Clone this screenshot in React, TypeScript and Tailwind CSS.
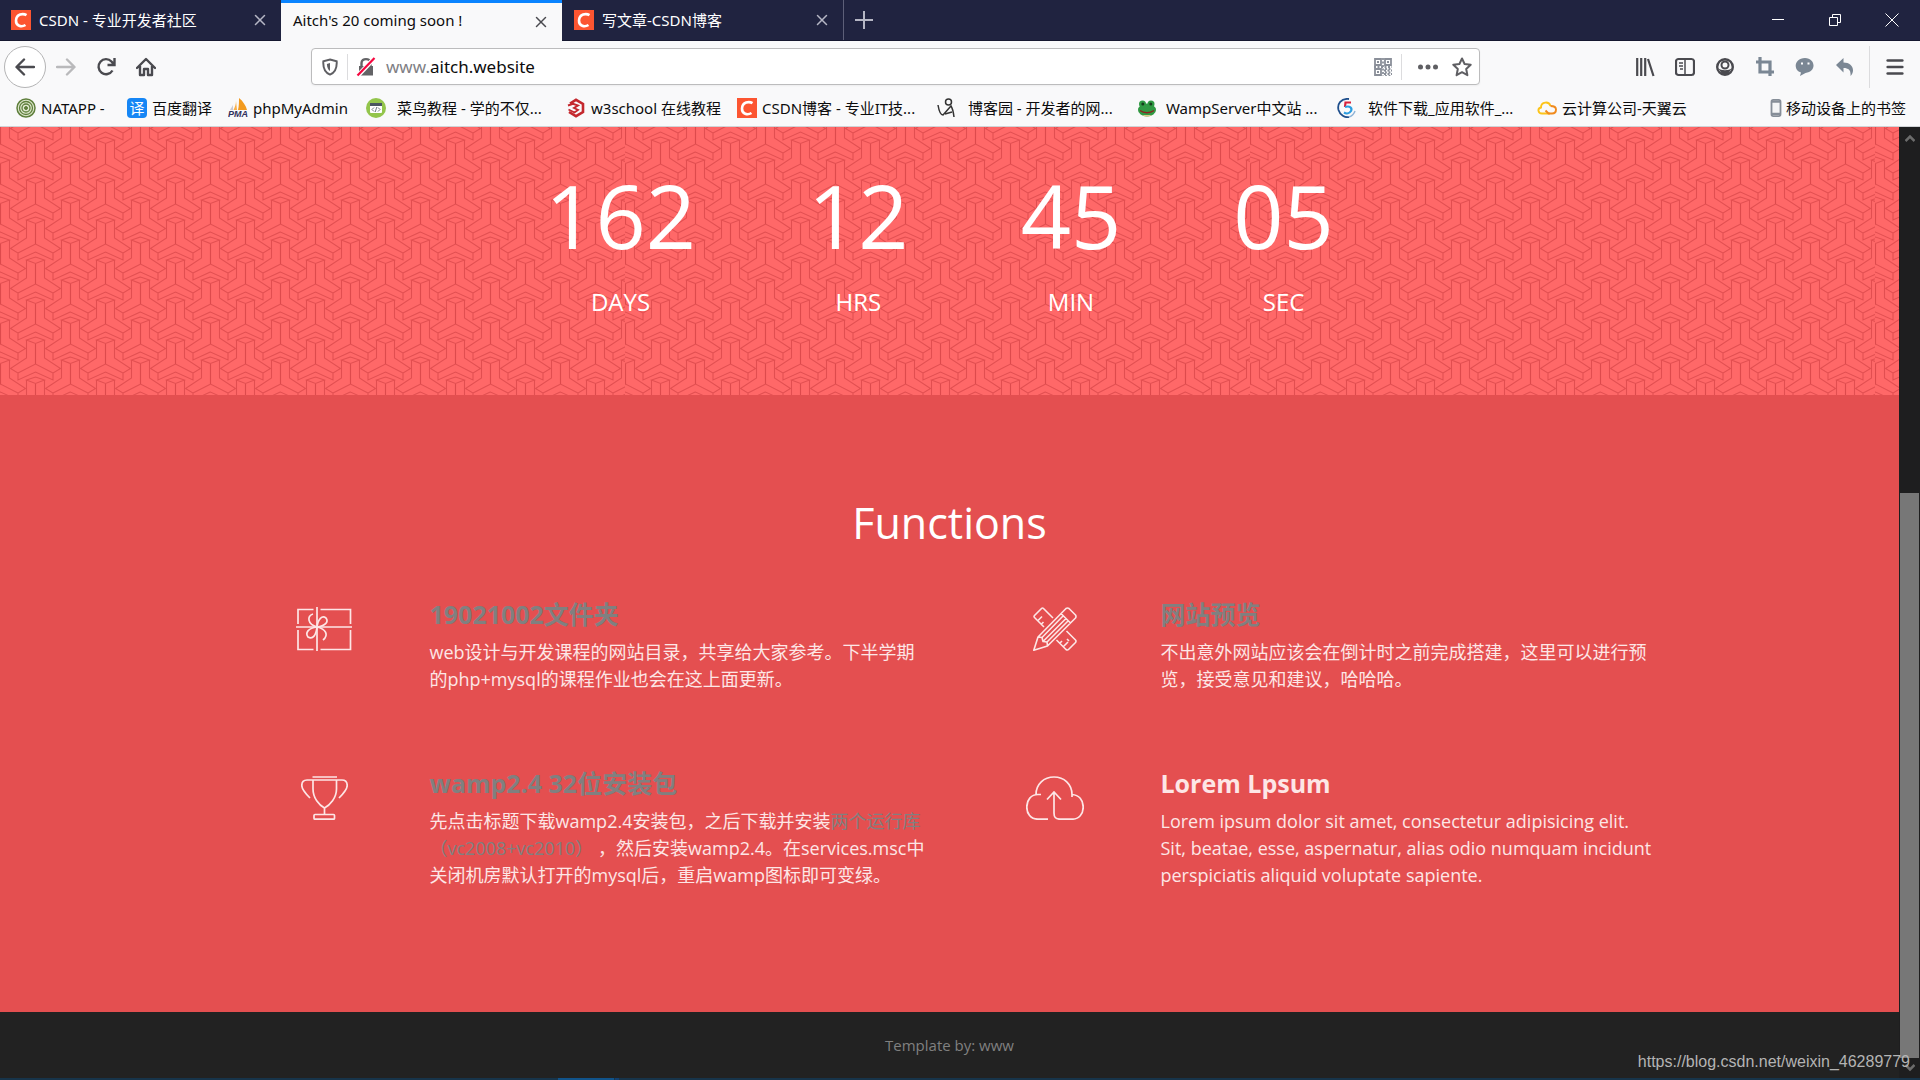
import type { ReactNode } from "react";
import { Menu, X } from "lucide-react";

const motifs = [
  [35.5, 37], [35.5, -3], [35.5, 77],
  [0.5, 17], [0.5, -23], [0.5, 57],
  [70.5, 17], [70.5, -23], [70.5, 57],
];

// One three-armed block of the hero weave, drawn around its centre joint
const weave =
  "M-9 -24L0 -27L9 -24L0 -20.5Z M-9 -24V-6L-25 4.5L-17.5 9V16L0 8L17.5 16V9L25 4.5L9 -6V-24 M-17.5 9L0 0L17.5 9";

function HeroPattern() {
  return (
    <svg className="absolute inset-0 w-full h-full" aria-hidden="true">
      <defs>
        <pattern id="weave" width="70" height="40" patternUnits="userSpaceOnUse">
          {motifs.map(([x, y], i) => (
            <g key={i} transform={`translate(${x} ${y})`} fill="none" stroke="#dd4a4c">
              <path d={weave} strokeWidth="1.1" strokeOpacity="0.85" />
              <path d="M0 0V-20" strokeWidth="1.2" />
            </g>
          ))}
        </pattern>
      </defs>
      {[0, 625, 1250, 1875].map((x) => (
        <svg key={x} x={x} width="625" height="100%">
          <rect width="100%" height="100%" fill="url(#weave)" />
        </svg>
      ))}
    </svg>
  );
}

function CsdnIcon() {
  return (
    <span className="w-5 h-5 shrink-0 bg-[#fc5531] text-white flex items-center justify-center">
      <svg viewBox="0 0 20 20" className="w-5 h-5" fill="none" stroke="currentColor" strokeWidth="2.6">
        <path d="M15.5 5.2C12 3 5.5 4 5 10.5C4.8 16 10.5 17.5 14.5 15" />
      </svg>
    </span>
  );
}

const bookmarkIcons: Record<string, ReactNode> = {
  natapp: (
    <svg viewBox="0 0 20 20" className="w-5 h-5" fill="none" stroke="#5f7f3c">
      <circle cx="10" cy="10" r="9" fill="#dfe8cf" strokeWidth="1.5" />
      <circle cx="10" cy="10" r="6.5" strokeWidth="1.3" />
      <circle cx="10" cy="10" r="4" strokeWidth="1.3" />
      <circle cx="10" cy="10" r="1.5" fill="#5f7f3c" />
    </svg>
  ),
  baidu: <span className="w-5 h-5 rounded-sm bg-[#1686f5] text-white text-[15px] leading-5 text-center">译</span>,
  pma: (
    <svg viewBox="0 0 20 20" className="w-5 h-5">
      <path d="M5.5 12C7 9 8 6 8 3L9 12Z" fill="#f9b04a" />
      <path d="M10 12C11 8 11 4 11 0C15 3 18 8 19 12Z" fill="#f29a1f" />
      <path d="M2 12C3 10 4.5 8 5 7V12Z" fill="#c9c9d3" />
      <text x="0" y="19" fontSize="9" fontWeight="700" fontStyle="italic" fill="#30305c" fontFamily="Liberation Sans, sans-serif">PMA</text>
    </svg>
  ),
  runoob: (
    <svg viewBox="0 0 20 20" className="w-5 h-5">
      <circle cx="10" cy="10" r="10" fill="#93c54b" />
      <rect x="4" y="5" width="12" height="10" rx="1" fill="#fff" />
      <rect x="4" y="5" width="12" height="3" fill="#4a5560" />
      <path d="M8 9.5L6 11.5L8 13.5M12 9.5L14 11.5L12 13.5M10.8 9L9.2 14" stroke="#4a5560" fill="none" strokeWidth=".8" />
    </svg>
  ),
  w3: (
    <svg viewBox="0 0 20 20" className="w-5 h-5" fill="none" stroke="#c4282e">
      <path d="M4 5.5L10 1.8L17 6V14L10 18.200L3 14" strokeWidth="2.6" />
      <path d="M2 7.5L7 5.8L12 7.5L8 10L12 12L8.500 14.500L2.500 11.500" strokeWidth="1.9" />
    </svg>
  ),
  csdn: <CsdnIcon />,
  cnblogs: (
    <svg viewBox="0 0 20 20" className="w-5 h-5" fill="none" stroke="#333" strokeWidth="1.5">
      <circle cx="11.5" cy="4" r="3" />
      <path d="M1 7C2 13 4 17 6 17L14 8C16 11 16.5 15 17 19M8 16L15 14" />
    </svg>
  ),
  wamp: (
    <svg viewBox="0 0 20 20" className="w-5 h-5">
      <ellipse cx="10" cy="12" rx="9" ry="6.5" fill="#2f9a43" />
      <circle cx="5.5" cy="6" r="3.5" fill="#2f9a43" />
      <circle cx="14" cy="6" r="3.5" fill="#2f9a43" />
      <circle cx="5.8" cy="6" r="1.5" fill="#163d1c" />
      <circle cx="13.8" cy="6" r="1.5" fill="#163d1c" />
      <path d="M3 12.5C7 15.5 13 15.5 17 12.5" stroke="#8c2320" strokeWidth="1.3" fill="none" />
      <path d="M5 17H15L12 18.5H8Z" fill="#d9c98a" />
    </svg>
  ),
  soft: (
    <svg viewBox="0 0 20 20" className="w-5 h-5" fill="none">
      <path d="M12 1C4 0 0 6 1.5 12C3 17 8 20 12 19" stroke="#1f4f8c" strokeWidth="1.8" />
      <path d="M18 13C17 16 15 18 12 19" stroke="#8fb4d8" strokeWidth="1.5" />
      <path d="M14 4.5H8.5L8 9" stroke="#d8213b" strokeWidth="2.2" />
      <path d="M8 9C13 7.5 15.5 10 14 13C12.5 15.5 9.5 16 7 14.5" stroke="#2c9de0" strokeWidth="2.2" />
    </svg>
  ),
  cloud: (
    <svg viewBox="0 0 20 20" className="w-5 h-5" fill="none" strokeWidth="1.9">
      <path d="M13 15.5H5C1 15.5 0 10.5 4 9.5C4 3.5 12 3 13.5 8" stroke="#fcc419" />
      <path d="M13.500 8C17 8 19 9.500 19 11.5C19 14 17.5 15.5 15 15.5H11.5L8.5 12.5" stroke="#f08a1d" />
    </svg>
  ),
};

const bookmarks = [
  { icon: "natapp", label: "NATAPP -", cls: "w-[70px]" },
  { icon: "baidu", label: "百度翻译" },
  { icon: "pma", label: "phpMyAdmin", cls: "w-[97px]" },
  { icon: "runoob", label: "菜鸟教程 - 学的不仅...", cls: "w-[159px] pl-1.5" },
  { icon: "w3", label: "w3school 在线教程" },
  { icon: "csdn", label: "CSDN博客 - 专业IT技...", cls: "w-[159px]" },
  { icon: "cnblogs", label: "博客园 - 开发者的网...", cls: "w-[159px] pl-1.5" },
  { icon: "wamp", label: "WampServer中文站 ...", cls: "w-[159px] pl-1" },
  { icon: "soft", label: "软件下载_应用软件_...", cls: "w-[159px] pl-1.5" },
  { icon: "cloud", label: "云计算公司-天翼云" },
];

function TabBar() {
  return (
    <div className="h-[41px] bg-[#202340] border-b border-[#15172f] flex text-white text-[15px]">
      <div className="w-[281px] pl-[11px] pr-3 flex items-center gap-2">
        <CsdnIcon />
        <span className="flex-1">CSDN - 专业开发者社区</span>
        <button aria-label="关闭标签页" className="text-[#b5b6c4]"><X size={18} strokeWidth={2} /></button>
      </div>
      <div className="w-[281px] h-[41px] pl-3 pr-3 flex items-center bg-[#f9f9fa] text-[#0c0c0d] border-t-3 border-[#0a84ff] pb-[3px]">
        <span className="flex-1">Aitch's 20 coming soon !</span>
        <button aria-label="关闭标签页" className="text-[#4a4a4f] pt-0.5"><X size={18} strokeWidth={2} /></button>
      </div>
      <div className="w-[282px] pl-3 pr-3 flex items-center gap-2 border-r border-[#5d5f78]">
        <CsdnIcon />
        <span className="flex-1">写文章-CSDN博客</span>
        <button aria-label="关闭标签页" className="text-[#b5b6c4]"><X size={18} strokeWidth={2} /></button>
      </div>
      <button aria-label="新建标签页" className="w-10 flex items-center justify-center text-[#b5b6c4]">
        <svg viewBox="0 0 18 18" className="w-[18px] h-[18px]" stroke="currentColor" strokeWidth="2"><path d="M9 0V18M0 9H18" /></svg>
      </button>
      <div className="ml-auto flex">
        <button aria-label="最小化" className="w-[57px] flex items-center justify-center">
          <svg viewBox="0 0 12 12" className="w-3 h-3" stroke="#fff"><path d="M0 5.5H12" /></svg>
        </button>
        <button aria-label="还原" className="w-[57px] flex items-center justify-center">
          <svg viewBox="0 0 12 12" className="w-3 h-3" stroke="#fff" fill="none"><path d="M.5 3.5H8.5V11.5H.5ZM3.5 3.5V.5H11.5V8.5H8.5" /></svg>
        </button>
        <button aria-label="关闭" className="w-[57px] flex items-center justify-center">
          <svg viewBox="0 0 14 14" className="w-3.5 h-3.5" stroke="#fff"><path d="M.5 .5L13.5 13.5M13.5 .5L.5 13.5" /></svg>
        </button>
      </div>
    </div>
  );
}

function Tool({ label, children, color = "text-[#4a4a4f]" }: { label: string; children: ReactNode; color?: string }) {
  return (
    <button aria-label={label} className={`w-10 h-10 flex items-center justify-center ${color}`}>
      <svg viewBox="0 0 20 20" className="w-5 h-5" fill="none" stroke="currentColor" strokeWidth="2.4">{children}</svg>
    </button>
  );
}

function NavBar() {
  return (
    <div className="h-[51px] pl-1 flex items-center">
      <button aria-label="后退" className="w-[42px] h-[42px] rounded-full border border-[#b4b4b5] bg-white flex items-center justify-center text-[#4a4a4f]">
        <svg viewBox="0 0 20 20" className="w-5 h-5" fill="none" stroke="currentColor" strokeWidth="2.4" strokeLinecap="round" strokeLinejoin="round"><path d="M19 10H2M9 2.5L1.5 10L9 17.5" /></svg>
      </button>
      <Tool label="前进" color="text-[#b9b9bb]"><path d="M1 10H18M11 2.5L18.5 10L11 17.5" strokeLinecap="round" strokeLinejoin="round" /></Tool>
      <Tool label="刷新"><path d="M16.5 13.5A7.5 7.5 0 1 1 15.5 4.5L17.5 7M18.5 1V8H11.5" /></Tool>
      <Tool label="主页"><path d="M1 11L10 2L19 11M4 9V18H8V12H12V18H16V9" strokeLinejoin="round" strokeLinecap="round" /></Tool>

      <div className="ml-[145px] w-[1169px] h-[37px] bg-white border border-[#bcbcbd] rounded-sm shadow-xs flex items-center">
        <svg viewBox="0 0 18 20" className="ml-2.5 w-4 h-[18px]" fill="none" stroke="#5f5f63" strokeWidth="2.2">
          <path d="M9 1.5L16.5 3.5C17 11 14 16.5 9 18.5C4 16.5 1 11 1.5 3.5Z" />
          <path d="M9 5.5V14.5C7 13 5.5 10 5.5 6.5Z" fill="#5f5f63" stroke="none" />
        </svg>
        <span className="w-px h-[26px] ml-[9px] bg-[#dcdcde]" />
        <svg viewBox="0 0 20 20" className="ml-2 w-5 h-5">
          <path d="M3 9H17V18.5H3Z" fill="#636366" />
          <path d="M5.5 9V6C5.5 .8 14.5 .8 14.5 6V9" stroke="#636366" strokeWidth="2.4" fill="none" />
          <path d="M2 18.5L18.5 1" stroke="#fff" strokeWidth="4.5" />
          <path d="M1.5 18.5L18.5 1" stroke="#f5073f" strokeWidth="2.2" />
        </svg>
        <div className="relative ml-2.5 flex-1 text-[17px]">
          <input aria-label="地址" defaultValue="www.aitch.website" className="w-full outline-none text-transparent caret-black" />
          <span aria-hidden="true" className="absolute inset-0 pointer-events-none text-[#0c0c0d]"><span className="text-[#808084]">www.</span>aitch.website</span>
        </div>
        <button aria-label="二维码">
          <svg viewBox="0 0 18 18" className="w-[18px] h-[18px]" fill="none" stroke="#8a8f99" strokeWidth="1.8">
            <path d="M1 1H7V7H1ZM11 1H17V7H11ZM1 11H7V17H1Z" />
            <path d="M3 4H5M13 4H15M3 14H5" />
            <path d="M9 0V18M0 9H18M12 10V18M15.5 10V18M10 12.5H18M10 16H18" strokeDasharray="2 1.5" />
          </svg>
        </button>
        <span className="w-px h-[26px] ml-[9px] bg-[#dcdcde]" />
        <button aria-label="页面操作" className="ml-4">
          <svg viewBox="0 0 20 20" className="w-5 h-5" fill="#5f5f63"><circle cx="2.5" cy="10" r="2.5" /><circle cx="10" cy="10" r="2.5" /><circle cx="17.5" cy="10" r="2.5" /></svg>
        </button>
        <button aria-label="收藏" className="ml-3.5 mr-[7px]">
          <svg viewBox="0 0 20 20" className="w-5 h-5" fill="none" stroke="#5f5f63" strokeWidth="2" strokeLinejoin="round">
            <path d="M10 1.5L12.6 7L18.7 7.8L14.2 12L15.4 18.2L10 15.2L4.6 18.2L5.8 12L1.3 7.8L7.4 7Z" />
          </svg>
        </button>
      </div>

      <div className="ml-auto flex items-center">
        <Tool label="书库"><path d="M2.2 1V19M6.2 1V19M10.2 1V19M13 2L18.5 19" strokeWidth="2.2" /></Tool>
        <Tool label="侧栏"><rect x="1" y="2" width="18" height="16" rx="2.5" strokeWidth="2.2" /><path d="M10 2V18" strokeWidth="1.5" /><path d="M4 6H8M4 9H8M5 12H8" strokeWidth="1.3" /></Tool>
        <Tool label="账户"><circle cx="10" cy="10" r="7.8" strokeWidth="2.4" /><circle cx="10" cy="8" r="3.5" strokeWidth="2" /><path d="M3 11C6 14 14 14 17 11L13 17H7Z" fill="currentColor" stroke="none" /></Tool>
        <Tool label="截图" color="text-[#7b8794]"><path d="M5 0V15H19M1 5H15V19" strokeWidth="3.2" /></Tool>
        <Tool label="消息" color="text-[#7b8794]">
          <path d="M10 1C20.5 1 22 15 10.5 16L5 19L6 15.5C-2.5 13 -.5 1 10 1Z" fill="currentColor" stroke="none" />
          <path d="M6 6.5H8M12.5 6.5H14.5" stroke="#fff" strokeWidth="1.8" />
        </Tool>
        <Tool label="撤销" color="text-[#7b8794]"><path d="M8.5 1V5.5C17 5.5 21 13 15.5 19C16 13.5 14 11 8.5 11V15.5L1 8Z" fill="currentColor" stroke="none" /></Tool>
        <span className="w-px h-[42px] ml-1 bg-[#dcdcde]" />
        <button aria-label="菜单" className="w-[50px] flex items-center justify-center text-[#4a4a4f]"><Menu size={22} strokeWidth={2.8} /></button>
      </div>
    </div>
  );
}

function BookmarkBar() {
  return (
    <nav className="h-[35px] pl-4 pr-3.5 pb-0.5 flex items-center gap-4 text-[15px] text-[#0c0c0d] border-b border-[#d0d3d6] whitespace-nowrap">
      {bookmarks.map((b) => (
        <a key={b.label} href="#" className="flex items-center gap-[5px]">
          {bookmarkIcons[b.icon]}
          <span className={b.cls}>{b.label}</span>
        </a>
      ))}
      <a href="#" className="ml-auto flex items-center gap-1">
        <svg viewBox="0 0 12 20" className="w-3 h-[18px]"><rect x="1" y="1" width="10" height="18" rx="2" fill="#f4f5f6" stroke="#868e98" strokeWidth="2" /><path d="M1 3H11M1 16.5H11" stroke="#868e98" strokeWidth="2.5" /></svg>
        移动设备上的书签
      </a>
    </nav>
  );
}

const countdown = [
  { value: "162", unit: "DAYS" },
  { value: "12", unit: "HRS" },
  { value: "45", unit: "MIN" },
  { value: "05", unit: "SEC" },
];

function Hero() {
  return (
    <section className="relative h-[268px] bg-[#ff6868] text-white">
      <HeroPattern />
      <div className="relative flex justify-center gap-28 pr-5 pt-[39px]">
        {countdown.map((c) => (
          <div key={c.unit} className="text-center">
            <div className="text-[88px] leading-[98px]">{c.value}</div>
            <div className="text-2xl leading-9 mt-5">{c.unit}</div>
          </div>
        ))}
      </div>
    </section>
  );
}

function Feature({ icon, title, children }: { icon: ReactNode; title: ReactNode; children: ReactNode }) {
  return (
    <div className="flex h-[169px] text-[#fde6e6]">
      <div className="w-[211px] shrink-0 flex justify-center pt-2.5">{icon}</div>
      <div className="whitespace-nowrap">
        <h3 className="text-[25px] leading-[34px] font-bold">{title}</h3>
        <p className="mt-2 text-[18px] leading-[27px]">{children}</p>
      </div>
    </div>
  );
}

function Functions() {
  return (
    <section className="flex-1 bg-[#e44f50] pt-[98px]">
      <h2 className="text-center text-[43px] leading-[60px] text-white">Functions</h2>
      <div className="max-w-[1462px] mx-auto mt-11 grid grid-cols-2">
        <Feature
          icon={
            <svg viewBox="0 0 56 44" className="w-14 h-11" fill="none" stroke="currentColor" strokeWidth="1.7">
              <path d="M17.5 2.5H2V17M24.5 2.5H54.5V17M2 23V42.5H17.5M24.5 42.5H54.5V23M0 20H56M21 0V44" />
              <path d="M17 7C11 9 11 17 21 20C22 12 26 8 30 11C33 15 29 19 21 20C12 21 9 26 12 30C17 33 20 28 21 20C30 22 33 28 27 33" />
            </svg>
          }
          title={<a href="#" className="text-[#808080]">19021002文件夹</a>}
        >
          web设计与开发课程的网站目录，共享给大家参考。下半学期<br />的php+mysql的课程作业也会在这上面更新。
        </Feature>
        <Feature
          icon={
            <svg viewBox="0 0 44 44" className="w-11 h-11" fill="none" stroke="currentColor" strokeWidth="1.6" strokeLinejoin="round">
              <path d="M.8 43.2L5 30L33 1.5Q34.5 .5 36 1.5L42.5 8Q43.5 9.5 42.5 11L14.5 39ZM5 30L9 30.5L10 34.5L14 35L14.5 39M28 6.5L37.5 16M9 30.5L30.5 8.5M10 34.5L33 11.5M14 35L35.5 13.5" />
              <path d="M20 11L10.5 1.5Q9.5 .5 8.5 1.5L1.5 8.5Q.5 9.5 1.5 10.5L11 20M5 13.5L9 9.5M8.5 17L10.5 15M33.5 24L42.5 33Q43.5 34 42.5 35.5L35.5 42.5Q34.5 43.5 33 42.5L23.5 33M27 36L29 34M30.5 39.5L35 35M34 32L36 34" />
            </svg>
          }
          title={<a href="#" className="text-[#808080]">网站预览</a>}
        >
          不出意外网站应该会在倒计时之前完成搭建，这里可以进行预<br />览，接受意见和建议，哈哈哈。
        </Feature>
        <Feature
          icon={
            <svg viewBox="0 0 47 44" className="w-[47px] h-11" fill="none" stroke="currentColor" strokeWidth="1.7">
              <path d="M11.5 1H36M9 22C4 17 .8 13 .8 9.5Q.8 4 6 4H41Q46.2 4 46.2 9.5C46.2 13 43 17 38 22M12 4V13C12 22 18 29 23.5 32C29 29 35.5 22 35.5 13V4M23.5 32V38" />
              <rect x="13" y="38.5" width="20.5" height="4.7" rx="1" />
            </svg>
          }
          title={<a href="#" className="text-[#808080]">wamp2.4 32位安装包</a>}
        >
          先点击标题下载wamp2.4安装包，之后下载并安装<a href="#" className="text-[#808080]">两个运行库<br />（vc2008+vc2010）</a> ，然后安装wamp2.4。在services.msc中<br />关闭机房默认打开的mysql后，重启wamp图标即可变绿。
        </Feature>
        <Feature
          icon={
            <svg viewBox="0 0 58 44" className="w-[58px] h-11" fill="none" stroke="currentColor" strokeWidth="1.7">
              <path d="M22 43.2H12C4 43.2 .8 37 .8 31C.8 24 5 18.5 12 18.5H15M10 18.5C10 8 18 1 28 1C38 1 46 8 46 18.5V21M46 18.5C53 19 57.2 24 57.2 31C57.2 38 53 43.2 46 43.2H34C30 43.2 28 42 28 37V16.5M21 23.5L28 16L35 23.5" />
            </svg>
          }
          title="Lorem Lpsum"
        >
          Lorem ipsum dolor sit amet, consectetur adipisicing elit.<br />Sit, beatae, esse, aspernatur, alias odio numquam incidunt<br />perspiciatis aliquid voluptate sapiente.
        </Feature>
      </div>
    </section>
  );
}

function ScrollBar() {
  return (
    <div className="w-[21px] shrink-0 bg-[#1e1e1f] flex flex-col items-center text-[#6c6c6c]" aria-hidden="true">
      <svg viewBox="0 0 10 8" className="w-2.5 h-2 mt-[7px]" fill="none" stroke="currentColor" strokeWidth="2.5"><path d="M.5 7L5 2.5L9.5 7" /></svg>
      <div className="w-[19px] flex-1 mt-[351px] bg-[#777777]" />
      <svg viewBox="0 0 10 8" className="w-2.5 h-2 my-[6px]" fill="none" stroke="currentColor" strokeWidth="2.5"><path d="M.5 1L5 5.5L9.5 1" /></svg>
    </div>
  );
}

export default function App() {
  return (
    <div className="relative min-h-screen flex flex-col bg-[#f9f9fa] font-['Open_Sans','Noto_Sans_CJK_SC',sans-serif]">
      <header className="font-['Noto_Sans','Noto_Sans_CJK_SC',sans-serif]">
        <TabBar />
        <NavBar />
        <BookmarkBar />
      </header>
      <div className="flex-1 flex">
        <main className="flex-1 flex flex-col">
          <Hero />
          <Functions />
          <footer className="h-[66px] bg-[#222222] text-[#808080] text-[15px] flex items-center justify-center">Template by: www</footer>
        </main>
        <ScrollBar />
      </div>
      <div className="h-0.5 bg-[#17344a] flex">
        <span className="w-14 ml-[558px] bg-[#10538a]" />
        <span className="w-1 ml-px bg-[#124070]" />
      </div>
      <span className="absolute right-[10px] bottom-1.5 text-[16px] leading-6 text-[#b4b4b4] font-['Liberation_Sans',sans-serif]">https://blog.csdn.net/weixin_46289779</span>
    </div>
  );
}
